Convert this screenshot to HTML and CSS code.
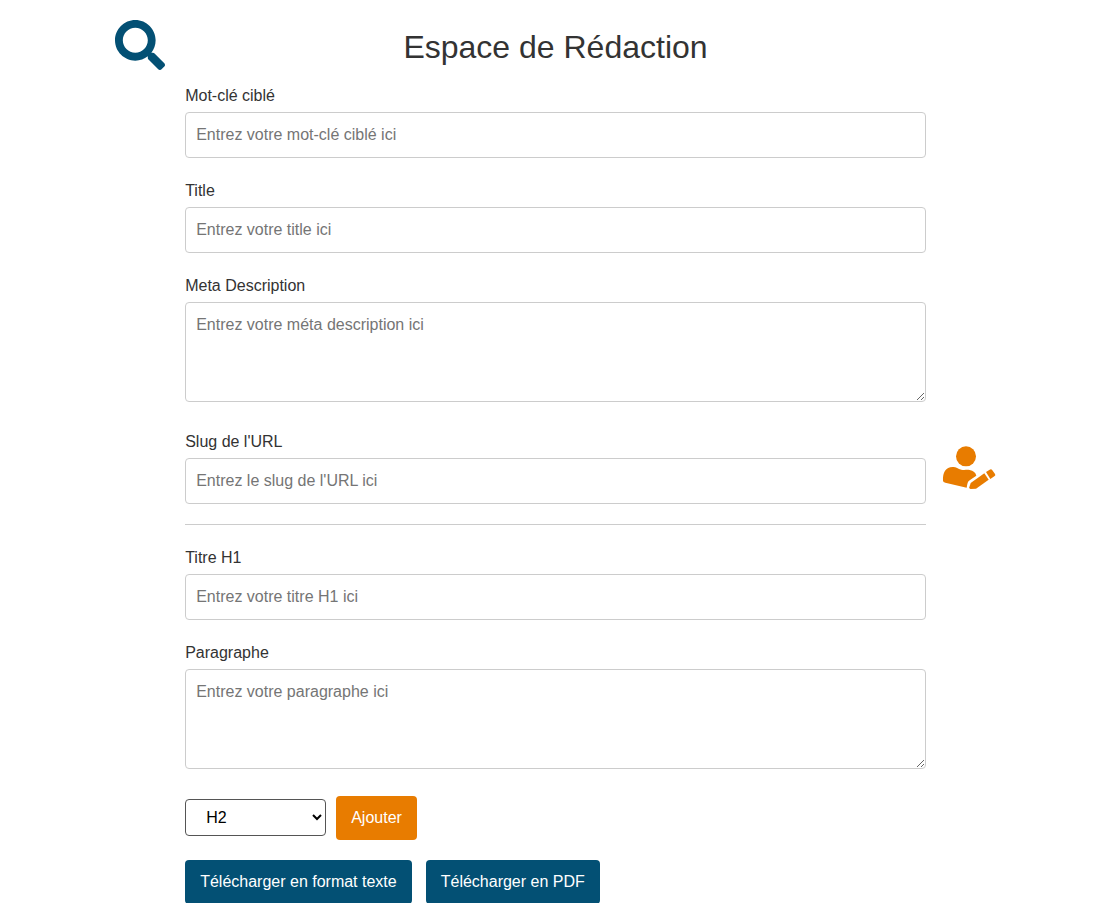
FILE: index.html
```html
<!DOCTYPE html>
<html lang="fr">
<head>
  <meta charset="UTF-8">
  <meta name="viewport" content="width=device-width, initial-scale=1.0">
  <title>Espace de Rédaction</title>
  <link rel="stylesheet" href="styles.css">
</head>
<body>
  <div class="page">
    <svg class="icon-search" viewBox="0 0 512 512" aria-hidden="true">
      <path d="M505 442.7L405.3 343c-4.5-4.5-10.6-7-17-7H372c27.6-35.3 44-79.7 44-128C416 93.1 322.9 0 208 0S0 93.1 0 208s93.1 208 208 208c48.3 0 92.7-16.4 128-44v16.3c0 6.4 2.5 12.5 7 17l99.7 99.7c9.4 9.4 24.6 9.4 33.9 0l28.3-28.3c9.4-9.4 9.4-24.6.1-34zM208 336c-70.7 0-128-57.2-128-128 0-70.7 57.2-128 128-128 70.7 0 128 57.2 128 128 0 70.7-57.2 128-128 128z"/>
    </svg>

    <main class="container">
      <h1>Espace de Rédaction</h1>
      <form>
        <div class="form-group">
          <label for="keyword">Mot-clé ciblé</label>
          <input type="text" id="keyword" name="keyword" placeholder="Entrez votre mot-clé ciblé ici">
        </div>
        <div class="form-group">
          <label for="title">Title</label>
          <input type="text" id="title" name="title" placeholder="Entrez votre title ici">
        </div>
        <div class="form-group">
          <label for="meta">Meta Description</label>
          <textarea id="meta" name="meta" placeholder="Entrez votre méta description ici"></textarea>
        </div>
        <div class="form-group">
          <label for="slug">Slug de l'URL</label>
          <input type="text" id="slug" name="slug" placeholder="Entrez le slug de l'URL ici">
        </div>

        <hr>

        <div class="form-group">
          <label for="h1">Titre H1</label>
          <input type="text" id="h1" name="h1" placeholder="Entrez votre titre H1 ici">
        </div>
        <div class="form-group">
          <label for="paragraph">Paragraphe</label>
          <textarea id="paragraph" name="paragraph" placeholder="Entrez votre paragraphe ici"></textarea>
        </div>

        <!-- Ajout d'un bloc -->
        <div class="add-block">
          <select id="blockType" name="blockType" aria-label="Type de bloc">
            <option>H2</option>
            <option>H3</option>
            <option>H4</option>
            <option>Paragraphe</option>
          </select>
          <button type="button" class="btn btn-add">Ajouter</button>
        </div>

        <!-- Export -->
        <div class="downloads">
          <button type="button" class="btn">Télécharger en format texte</button>
          <button type="button" class="btn">Télécharger en PDF</button>
        </div>
      </form>
    </main>

    <svg class="icon-writer" viewBox="36 30 162 135" aria-hidden="true">
      <circle cx="108" cy="64" r="30"/>
      <path d="M39 137C38 112 47 97 68 96C78 95 83 102 94 104C105 106 111 103 119 105C130 107 137 113 139 122L119 136Q113 140 112 147L110 158L46 143Q39 142 39 137Z"/>
      <path d="M122 144L163 115L176 134L138 161L122 162Q117 162 118 157Z"/>
      <path d="M168 111L179 104Q184 101 187 106L195 117Q198 121 193 124L181 132Z"/>
    </svg>
  </div>
</body>
</html>
```

FILE: styles.css
```css
* {
  box-sizing: border-box;
}
body {
  margin: 0;
  background-color: #fff;
  color: #333;
  font-family: Arial, "Liberation Sans", sans-serif;
  font-size: 16px;
  line-height: 24px;
}

/* Layout */
.page {
  display: grid;
  grid-template-columns: 1fr 4fr 1fr;
  padding-top: 20px;
  padding-right: 1px;
}
.container {
  min-width: 0;
  padding-bottom: 10px;
}
h1 {
  margin: 0;
  padding: 8px 0 17px;
  font-size: 32px;
  font-weight: normal;
  line-height: 38px;
  text-align: center;
}
hr {
  margin: 20px 0;
  border: 0;
  border-top: 1px solid #ccc;
}

/* Icons */
.icon-search {
  width: 50px;
  height: 50px;
  margin-right: 20px;
  justify-self: end;
  fill: #035074;
}
.icon-writer {
  width: 54px;
  height: 45px;
  margin-left: 16px;
  align-self: center;
  fill: #e87c00;
}

/* Form */
.form-group {
  margin-bottom: 20px;
}
label {
  display: block;
  margin-bottom: 3px;
  line-height: 26px;
}
input,
textarea {
  width: 100%;
  padding: 10px;
  border: 1px solid #ccc;
  border-radius: 4px;
  font: inherit;
  color: inherit;
}
input {
  display: block;
  height: 46px;
}
textarea {
  height: 100px;
  resize: vertical;
}
input::placeholder,
textarea::placeholder {
  color: #757575;
}
.add-block {
  display: flex;
  align-items: baseline;
  gap: 10px;
  margin: 20px 0;
}
select {
  width: 141px;
  height: 37px;
  padding: 0 0 0 16px;
  border: 1px solid #555;
  border-radius: 4px;
  background-color: #fff;
  color: #000;
  font: inherit;
}
.downloads {
  display: flex;
  flex-wrap: wrap;
  gap: 14px;
}
.btn {
  padding: 10px 15px;
  border: none;
  border-radius: 4px;
  background-color: #035074;
  color: #fff;
  font: inherit;
  cursor: pointer;
}
.btn-add {
  background-color: #e87c00;
}
.btn:hover {
  opacity: 0.9;
}
```
